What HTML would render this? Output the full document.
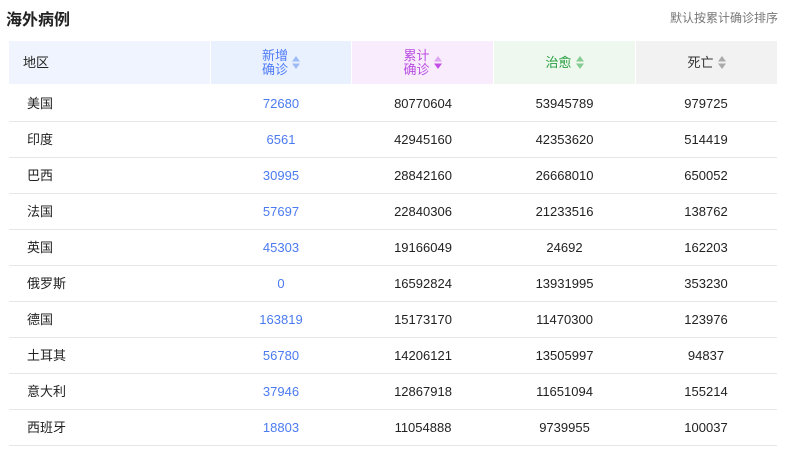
<!DOCTYPE html>
<html><head><meta charset="utf-8"><style>
*{margin:0;padding:0;box-sizing:border-box}
body{width:785px;height:451px;background:#fff;font-family:"Liberation Sans","Noto Sans CJK SC",sans-serif;color:#222;overflow:hidden;position:relative}
.title{position:absolute;left:6px;top:6px;font-size:16px;font-weight:bold;color:#222}
.note{position:absolute;right:7px;top:9px;font-size:12px;color:#777}
.hd{position:absolute;top:41px;height:43px;display:flex;align-items:center;justify-content:center;font-size:13px;line-height:14px}
.row{position:absolute;left:9px;width:768px;height:36px;border-bottom:1px solid #e6e6e6;font-size:13px}
.row span{position:absolute;top:0;line-height:36px;text-align:center}
.c1{left:18px}
.c2{left:202px;width:140px;color:#4b7bf0}
.c3{left:343px;width:142px}
.c4{left:485px;width:141px}
.c5{left:626px;width:142px}
svg{margin-left:4px}
</style></head><body>
<div class="title">海外病例</div>
<div class="note">默认按累计确诊排序</div>
<div class="hd" style="left:9px;width:201px;background:#f0f4fe;justify-content:flex-start;padding-left:14px;color:#222">地区</div>
<div class="hd" style="left:211px;width:140px;background:#eaf1fe;color:#4f7cf7"><div>新增<br>确诊</div><svg width="8" height="13"><path d="M4 0L8 5.5H0z" fill="#9dbcf8"/><path d="M4 13L8 7.5H0z" fill="#9dbcf8"/></svg></div>
<div class="hd" style="left:352px;width:141px;background:#f9ecfd;color:#b94fe0"><div>累计<br>确诊</div><svg width="8" height="13"><path d="M4 0L8 5.5H0z" fill="#dda6f0"/><path d="M4 13L8 7.5H0z" fill="#c24ee6"/></svg></div>
<div class="hd" style="left:494px;width:141px;background:#eef8ef;color:#2aa041">治愈<svg width="8" height="13"><path d="M4 0L8 5.5H0z" fill="#86cc93"/><path d="M4 13L8 7.5H0z" fill="#86cc93"/></svg></div>
<div class="hd" style="left:636px;width:141px;background:#f2f2f2;color:#333">死亡<svg width="8" height="13"><path d="M4 0L8 5.5H0z" fill="#aaa"/><path d="M4 13L8 7.5H0z" fill="#aaa"/></svg></div>

<div class="row" style="top:86px"><span class="c1">美国</span><span class="c2">72680</span><span class="c3">80770604</span><span class="c4">53945789</span><span class="c5">979725</span></div>
<div class="row" style="top:122px"><span class="c1">印度</span><span class="c2">6561</span><span class="c3">42945160</span><span class="c4">42353620</span><span class="c5">514419</span></div>
<div class="row" style="top:158px"><span class="c1">巴西</span><span class="c2">30995</span><span class="c3">28842160</span><span class="c4">26668010</span><span class="c5">650052</span></div>
<div class="row" style="top:194px"><span class="c1">法国</span><span class="c2">57697</span><span class="c3">22840306</span><span class="c4">21233516</span><span class="c5">138762</span></div>
<div class="row" style="top:230px"><span class="c1">英国</span><span class="c2">45303</span><span class="c3">19166049</span><span class="c4">24692</span><span class="c5">162203</span></div>
<div class="row" style="top:266px"><span class="c1">俄罗斯</span><span class="c2">0</span><span class="c3">16592824</span><span class="c4">13931995</span><span class="c5">353230</span></div>
<div class="row" style="top:302px"><span class="c1">德国</span><span class="c2">163819</span><span class="c3">15173170</span><span class="c4">11470300</span><span class="c5">123976</span></div>
<div class="row" style="top:338px"><span class="c1">土耳其</span><span class="c2">56780</span><span class="c3">14206121</span><span class="c4">13505997</span><span class="c5">94837</span></div>
<div class="row" style="top:374px"><span class="c1">意大利</span><span class="c2">37946</span><span class="c3">12867918</span><span class="c4">11651094</span><span class="c5">155214</span></div>
<div class="row" style="top:410px"><span class="c1">西班牙</span><span class="c2">18803</span><span class="c3">11054888</span><span class="c4">9739955</span><span class="c5">100037</span></div>
</body></html>
